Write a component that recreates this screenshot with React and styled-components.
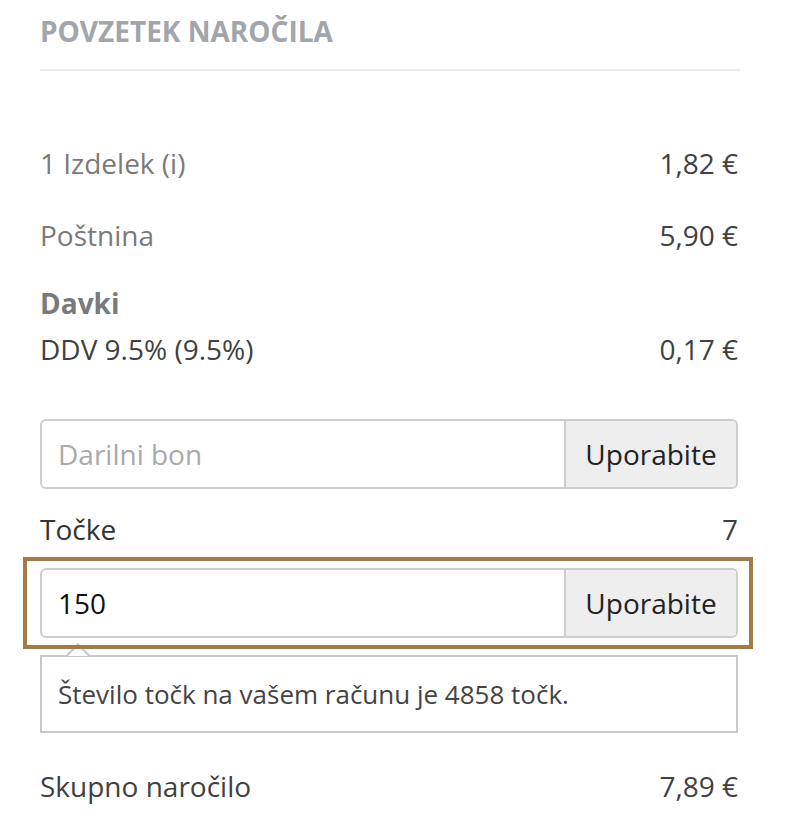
import React from 'react'
import styled, { createGlobalStyle } from 'styled-components'

const GlobalStyle = createGlobalStyle`
  body {
    margin: 0;
    background: #fff;
    font-family: "Open Sans", "Noto Sans", sans-serif;
  }
`

const Summary = styled.section`
  width: 698px;
  padding: 14px 0 40px 40px;
  color: #414141;
  font-size: 28px;
`

const Title = styled.h2`
  margin: 0;
  padding-bottom: 21px;
  border-bottom: 2px solid #ececec;
  margin-right: -2px;
  font-size: 28px;
  line-height: 34px;
  font-weight: 700;
  text-transform: uppercase;
  color: #a2a5a9;
`

const Row = styled.div`
  display: flex;
  justify-content: space-between;
  align-items: center;
  line-height: 34px;
  margin-top: ${props => props.gap || 0}px;
  color: ${props => props.muted ? '#7a7a7a' : '#414141'};
`

const GroupTitle = styled.div`
  margin-top: ${props => props.gap}px;
  line-height: 34px;
  font-weight: 700;
  color: #7a7a7a;
`

const Value = styled.span`
  color: #414141;
`

const InputGroup = styled.div`
  display: flex;
  height: 70px;
  box-sizing: border-box;
  margin-top: ${props => props.gap || 0}px;
  border: 2px solid #cdcdcd;
  border-radius: 6px;
  overflow: hidden;
  background: #fff;
`

const Field = styled.input`
  flex: 1;
  min-width: 0;
  border: none;
  outline: none;
  padding: 0 16px;
  font-family: inherit;
  font-size: 28px;
  color: #111;
  background: transparent;

  &::placeholder {
    color: #a9a9a9;
  }
`

const ApplyButton = styled.button`
  width: 172px;
  border: none;
  border-left: 2px solid #cdcdcd;
  background: #eeeeee;
  font-family: inherit;
  font-size: 28px;
  color: #222;
  cursor: pointer;
`

const Highlight = styled.div`
  position: relative;
  z-index: 1;
  margin: 11px -15px 0 -17px;
  padding: 7px 11px 7px 13px;
  border: 4px solid #a47b47;
`

const Tooltip = styled.div`
  position: relative;
  margin-top: 6px;
  height: 78px;
  box-sizing: border-box;
  display: flex;
  align-items: center;
  padding: 0 16px;
  border: 2px solid #c6c9cc;
  background: #fff;
  color: #444;
  font-size: 26px;

  &::before,
  &::after {
    content: '';
    position: absolute;
    left: 24px;
    border-style: solid;
    border-color: transparent;
  }

  &::before {
    top: -14px;
    border-width: 0 12px 12px;
    border-bottom-color: #c6c9cc;
  }

  &::after {
    top: -11px;
    left: 26px;
    border-width: 0 10px 10px;
    border-bottom-color: #fff;
  }
`

const PointsLabel = styled.span`
  color: #333;
`

const App = () => {
  return (
    <>
      <GlobalStyle />
      <Summary>
        <Title>Povzetek naročila</Title>

        <Row muted gap={75}>
          <span>1 Izdelek (i)</span>
          <Value>1,82 €</Value>
        </Row>
        <Row muted gap={38}>
          <span>Poštnina</span>
          <Value>5,90 €</Value>
        </Row>

        <GroupTitle gap={34}>Davki</GroupTitle>
        <Row gap={12}>
          <span>DDV 9.5% (9.5%)</span>
          <Value>0,17 €</Value>
        </Row>

        <InputGroup gap={53}>
          <Field placeholder="Darilni bon" />
          <ApplyButton>Uporabite</ApplyButton>
        </InputGroup>

        <Row gap={23}>
          <PointsLabel>Točke</PointsLabel>
          <Value>7</Value>
        </Row>

        <Highlight>
          <InputGroup>
            <Field defaultValue="150" />
            <ApplyButton>Uporabite</ApplyButton>
          </InputGroup>
        </Highlight>

        <Tooltip>Število točk na vašem računu je 4858 točk.</Tooltip>

        <Row gap={36}>
          <span>Skupno naročilo</span>
          <Value>7,89 €</Value>
        </Row>
      </Summary>
    </>
  )
}

export default App
